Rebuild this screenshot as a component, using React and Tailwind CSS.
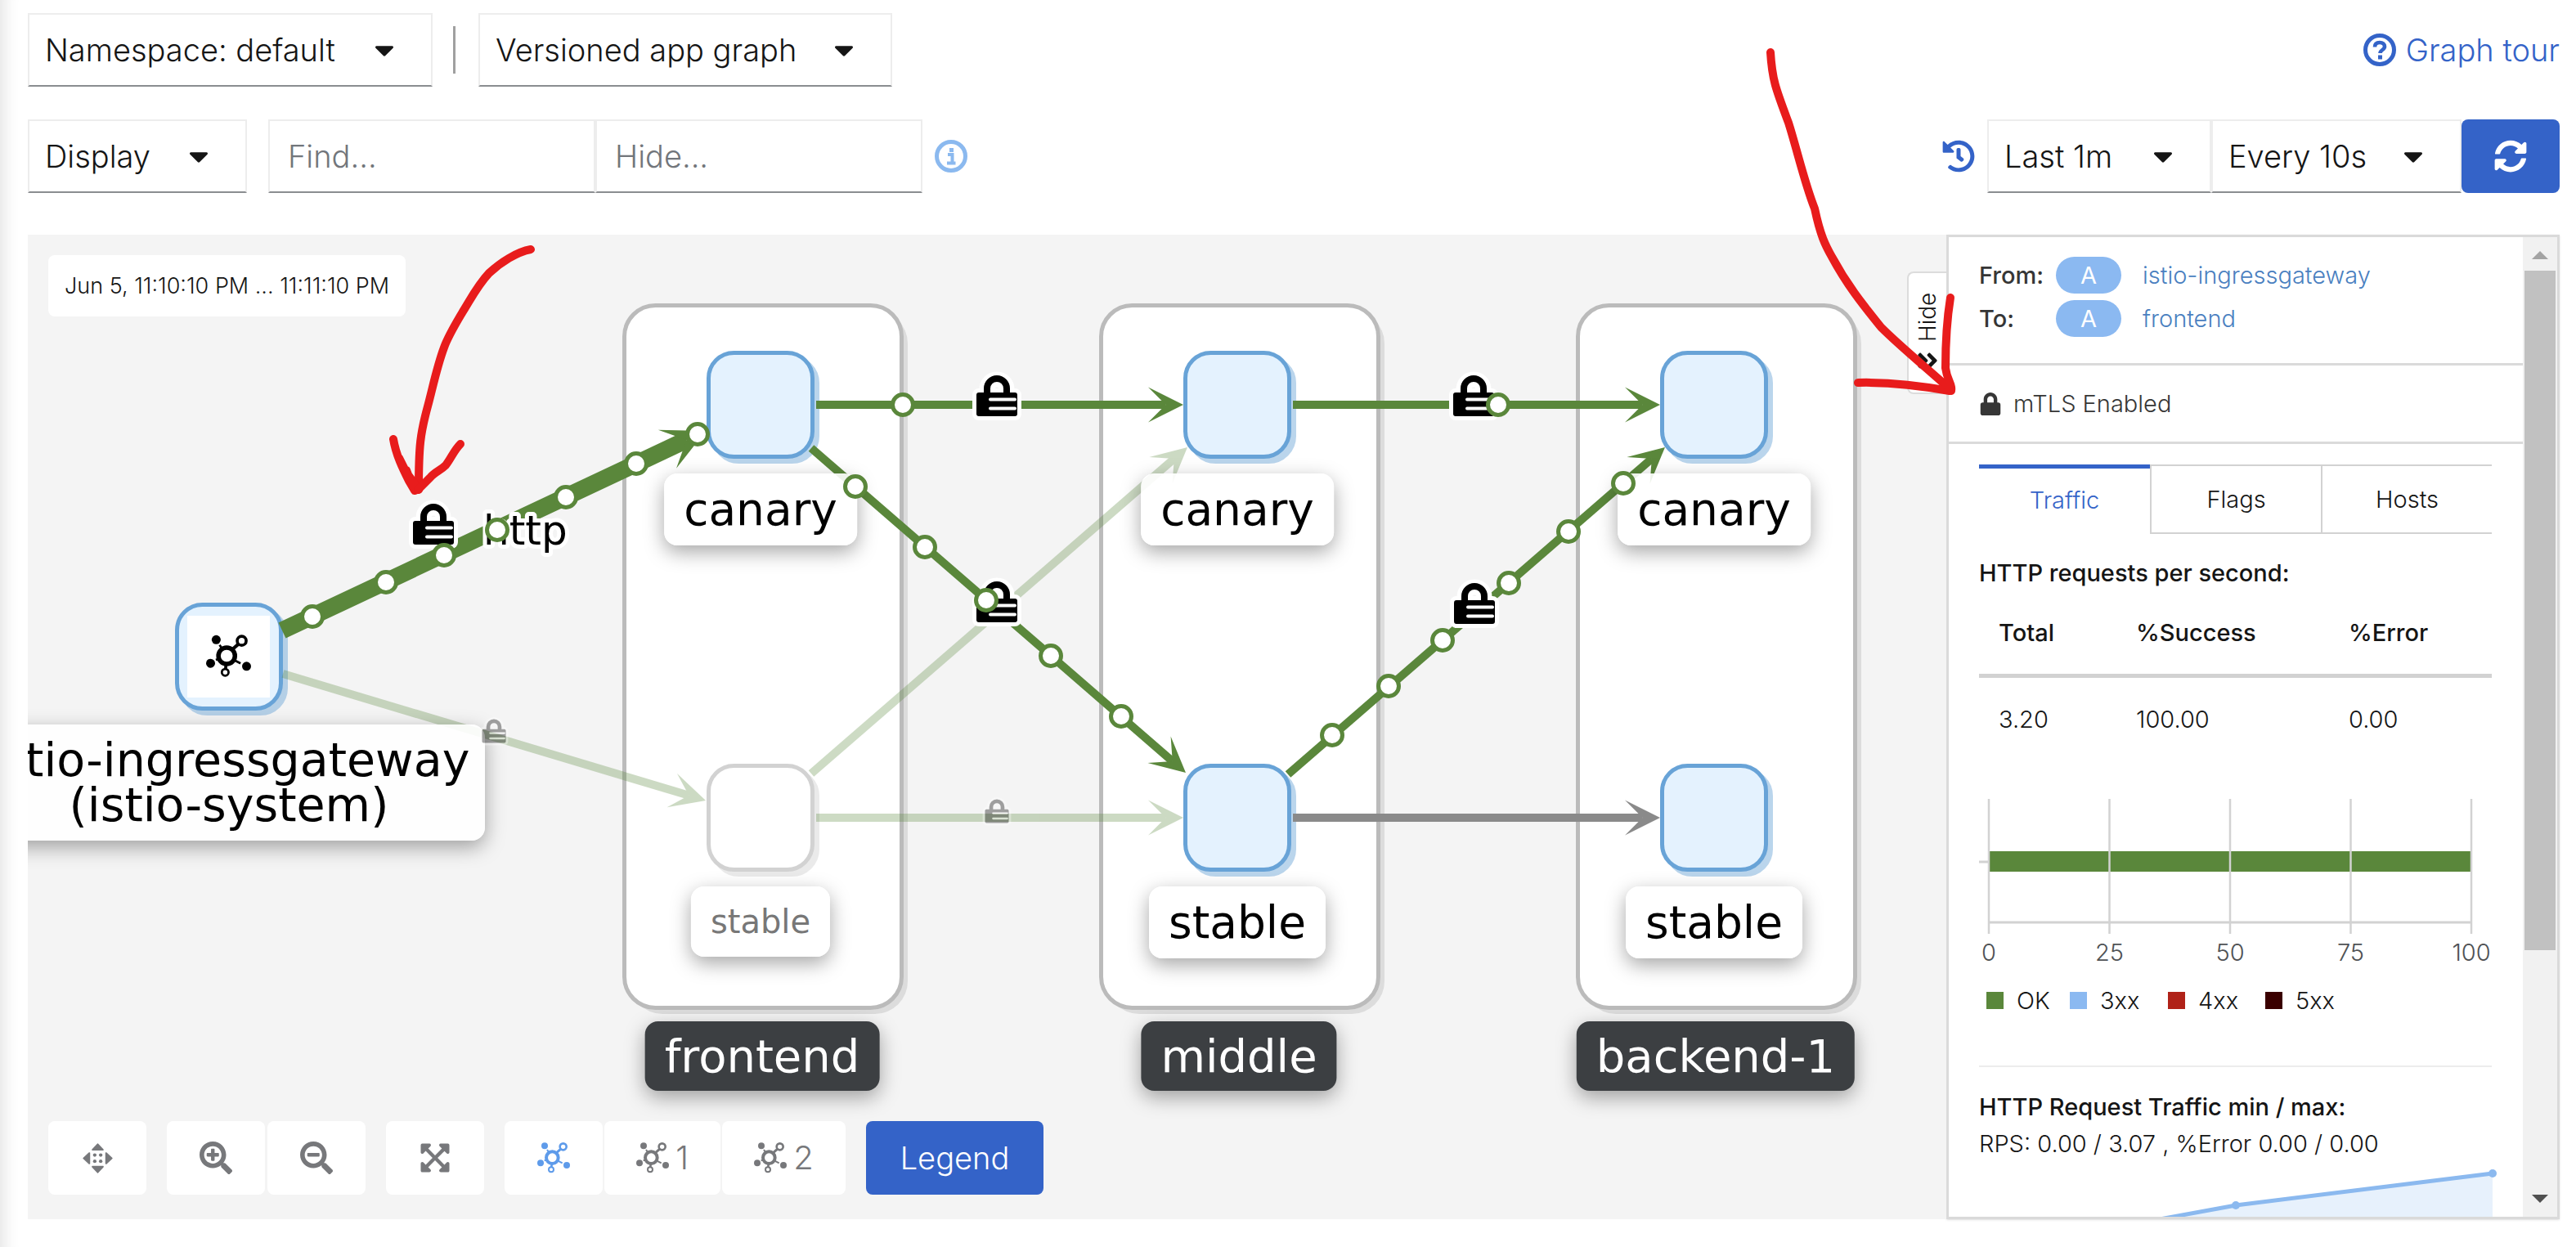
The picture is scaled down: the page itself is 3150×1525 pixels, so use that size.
import React from 'react';
import {
  FaCaretDown,
  FaHistory,
  FaSyncAlt,
  FaLock,
  FaSearchPlus,
  FaSearchMinus,
  FaExpandArrowsAlt,
  FaAngleDoubleLeft,
} from 'react-icons/fa';

const GREEN = '#5a873b';
const ORIGIN = { x: 34, y: 287 };
const NODE = 132;

/* ---------- icons ---------- */

function TopologyIcon({ className }) {
  return (
    <svg viewBox="0 0 120 112" className={className} fill="none" stroke="currentColor" aria-hidden="true">
      <circle cx="55" cy="56" r="22" strokeWidth="12" />
      <circle cx="27" cy="13" r="12" fill="currentColor" stroke="none" />
      <circle cx="12" cy="76" r="12" fill="currentColor" stroke="none" />
      <circle cx="108" cy="84" r="12" fill="currentColor" stroke="none" />
      <circle cx="95" cy="16" r="12" strokeWidth="8" />
      <circle cx="51" cy="100" r="9" strokeWidth="6" />
      <path d="M70 39 L87 24" strokeWidth="9" />
      <path d="M36 27 L42 36 M26 67 L34 64 M76 68 L92 76" strokeWidth="6" />
      <path d="M53 78 L52 92" strokeWidth="8" />
    </svg>
  );
}

function PanIcon({ className }) {
  return (
    <svg viewBox="0 0 112 112" className={className} fill="currentColor" stroke="currentColor" strokeWidth="4" strokeLinejoin="round" aria-hidden="true">
      <path d="M36 24 L56 3 L76 24 V25 H36 Z" />
      <path d="M36 88 L56 109 L76 88 V86 H36 Z" />
      <path d="M24 36 L3 56 L24 76 H26 V36 Z" />
      <path d="M88 36 L109 56 L88 76 H86 V36 Z" />
      <g stroke="none">
        <circle cx="45" cy="44" r="6.5" />
        <circle cx="67" cy="44" r="6.5" />
        <circle cx="45" cy="67" r="6.5" />
        <circle cx="67" cy="67" r="6.5" />
      </g>
    </svg>
  );
}

function HelpIcon({ className }) {
  return (
    <svg viewBox="0 0 40 40" className={className} fill="none" stroke="currentColor" aria-hidden="true">
      <circle cx="20" cy="20" r="17.5" strokeWidth="5" />
      <path d="M14 16.5 C14 12 17 11 20 11 C23.5 11 26 13 26 16 C26 20 20.5 20 20.5 24" strokeWidth="4.6" />
      <path d="M20.5 26.5 V31.5" strokeWidth="5" />
    </svg>
  );
}

function InfoIcon({ className }) {
  return (
    <svg viewBox="0 0 40 40" className={className} fill="none" stroke="currentColor" aria-hidden="true">
      <circle cx="20" cy="20" r="17.5" strokeWidth="5" />
      <path d="M16 18 H21.5 V28 M15 28.5 H25.5" strokeWidth="4" />
      <path d="M20.5 10 V15" strokeWidth="5" />
    </svg>
  );
}

/* ---------- toolbar ---------- */

const field =
  'block h-[90px] border-2 border-t-[#ededed] border-x-[#ededed] border-b-[#8a8d90] bg-white text-[38px] font-light text-[#151515]';

function MenuToggle({ label, width }) {
  return (
    <button type="button" aria-haspopup="true" className={`${field} ${width}`}>
      <span className="flex items-center justify-between pl-[19px] pr-[38px]">
        {label}
        <FaCaretDown aria-hidden="true" />
      </span>
    </button>
  );
}

function SelectToggle({ label, value, width }) {
  return (
    <div className={`relative ${width}`}>
      <select aria-label={label} defaultValue={value} className={`${field} w-full appearance-none pl-[19px] pr-20`}>
        <option>{value}</option>
      </select>
      <FaCaretDown aria-hidden="true" className="pointer-events-none absolute right-10 top-[26px] text-[38px] text-[#151515]" />
    </div>
  );
}

function Toolbar() {
  return (
    <header className="flex flex-col gap-10 pt-4">
      <div className="flex items-center justify-between">
        <div className="flex items-center">
          <MenuToggle label="Namespace: default" width="w-[495px]" />
          <span className="ml-[25px] mr-7 h-[58px] w-[3px] bg-[#a0a0a0]" />
          <SelectToggle label="Graph type" value="Versioned app graph" width="w-[506px]" />
        </div>
        <a href="#tour" className="flex items-center gap-3 text-[38px] font-light text-[#3463c8]">
          <HelpIcon className="size-10" />
          Graph tour
        </a>
      </div>
      <div className="flex items-center justify-between">
        <div className="flex items-center">
          <MenuToggle label="Display" width="w-[268px]" />
          <input aria-label="Find" placeholder="Find..." className={`${field} ml-[26px] w-[400px] px-[22px] placeholder:text-[#72767b]`} />
          <input aria-label="Hide" placeholder="Hide..." className={`${field} w-[400px] px-[22px] placeholder:text-[#72767b]`} />
          <button type="button" aria-label="Find and hide help" className="ml-[15px] text-[#8bb9ef]">
            <InfoIcon className="size-10" />
          </button>
        </div>
        <div className="flex items-center">
          <button type="button" aria-label="Replay" className="mr-[15px] text-[40px] text-[#3463c8]">
            <FaHistory />
          </button>
          <SelectToggle label="Duration" value="Last 1m" width="w-[274px]" />
          <SelectToggle label="Refresh interval" value="Every 10s" width="w-[306px]" />
          <button type="button" aria-label="Refresh" className="flex h-[90px] w-[120px] items-center justify-center rounded-lg bg-[#3463c8] text-[40px] text-white">
            <FaSyncAlt />
          </button>
        </div>
      </div>
    </header>
  );
}

/* ---------- graph ---------- */

const groups = [
  { x: 933, name: 'frontend' },
  { x: 1516, name: 'middle' },
  { x: 2099, name: 'backend-1' },
];

const nodes = [
  { x: 930, y: 495, label: 'canary' },
  { x: 1513, y: 495, label: 'canary' },
  { x: 2096, y: 495, label: 'canary' },
  { x: 930, y: 1000, label: 'stable', faded: true },
  { x: 1513, y: 1000, label: 'stable' },
  { x: 2096, y: 1000, label: 'stable' },
  { x: 280, y: 803, label: 'istio-ingressgateway (istio-system)', gateway: true },
];

const edges = [
  { from: [346, 824], to: [863, 979], faded: true },
  { from: [992, 946], to: [1452, 547], faded: true },
  { from: [998, 1000], to: [1447, 1000], faded: true },
  { from: [1581, 1000], to: [2030, 1000], color: '#8a8a8a' },
  { from: [345, 771], to: [863, 527], width: 21, head: 52 },
  { from: [998, 495], to: [1447, 495] },
  { from: [1581, 495], to: [2030, 495] },
  { from: [992, 548], to: [1450, 945] },
  { from: [1575, 947], to: [2036, 547] },
];

const pulses = [
  [382, 754], [472, 712], [543, 679], [608, 648], [692, 608], [778, 567], [853, 531],
  [1104, 495], [1832, 495],
  [1046, 595], [1131, 669], [1206, 734], [1285, 802], [1371, 876],
  [1629, 899], [1698, 839], [1764, 783], [1845, 713], [1918, 650], [1985, 591],
];

const locks = [
  { x: 530, y: 641 },
  { x: 1219, y: 484 },
  { x: 1802, y: 484 },
  { x: 1219, y: 736 },
  { x: 1803, y: 738 },
  { x: 604, y: 894, faded: true },
  { x: 1219, y: 992, faded: true },
];

function Edge({ from, to, width = 10, head = 43, color = GREEN, faded }) {
  const dx = to[0] - from[0];
  const dy = to[1] - from[1];
  const len = Math.hypot(dx, dy);
  const angle = (Math.atan2(dy, dx) * 180) / Math.PI;
  return (
    <g transform={`translate(${from[0]} ${from[1]}) rotate(${angle})`} opacity={faded ? 0.3 : 1} fill={color}>
      <rect x="0" y={-width / 2} width={len - head / 2} height={width} />
      <path d={`M${len} 0 L${len - head} ${-head / 2} L${len - head / 2} 0 L${len - head} ${head / 2} Z`} />
    </g>
  );
}

function PadLock({ x, y, faded }) {
  return (
    <g transform={`translate(${x} ${y}) scale(${faded ? 0.58 : 1})`} opacity={faded ? 0.35 : 1}>
      <g fill="none" stroke="#fff" strokeLinejoin="round">
        <path d="M-12 0 V-8 A12 12 0 0 1 12 -8 V0" strokeWidth="19" />
        <rect x="-25" y="-4" width="50" height="29" rx="3" strokeWidth="10" fill="#fff" />
      </g>
      <path d="M-12 0 V-9 A12 12 0 0 1 12 -9 V0" fill="none" stroke="#000" strokeWidth="8" />
      <rect x="-25" y="-4" width="50" height="29" rx="3" fill="#000" />
      <path d="M-8 4.5 H22 M-8 15.5 H22" stroke="#fff" strokeWidth="4" strokeLinecap="round" />
    </g>
  );
}

function GraphNode({ x, y, faded, gateway }) {
  const box = { x: x - NODE / 2 + 2.5, y: y - NODE / 2 + 2.5, width: NODE - 5, height: NODE - 5, rx: 31 };
  const stroke = faded ? '#d2d2d2' : '#68a3d7';
  return (
    <g>
      <rect {...box} transform="translate(6 6)" fill={stroke} stroke={stroke} strokeWidth="5" opacity="0.45" />
      <rect {...box} fill={faded ? '#fff' : '#e4f2fe'} stroke={stroke} strokeWidth="5" />
      {gateway && <rect x={x - 51} y={y - 50} width="101" height="100" fill="#fff" />}
    </g>
  );
}

function NodeLabel({ x, y, label, faded, gateway }) {
  const text = faded
    ? 'px-6 py-2 text-[40px]/[70px] text-[#777]'
    : gateway
      ? 'w-[626px] py-4 text-[57px]/[55px] text-black'
      : 'px-6 py-2 text-[55px]/[72px] text-black';
  return (
    <div
      className={`absolute -translate-x-1/2 rounded-2xl bg-white/90 text-center font-[DejaVu_Sans,sans-serif] shadow-[0_8px_24px_rgba(0,0,0,0.35)] ${text}`}
      style={{ left: x - ORIGIN.x, top: y + (gateway ? 83 : 84) - ORIGIN.y }}
    >
      {label}
    </div>
  );
}

function GraphControls() {
  const btn = 'flex h-[90px] items-center justify-center rounded-lg bg-white text-[40px] font-light text-[#77787b]';
  return (
    <div className="absolute bottom-[30px] left-[25px] flex gap-[25px]">
      <button type="button" aria-label="Toggle drag" className={`${btn} w-[120px]`}><PanIcon className="size-[37px]" /></button>
      <div className="flex gap-[3px]">
        <button type="button" aria-label="Zoom in" className={`${btn} w-[120px]`}><FaSearchPlus /></button>
        <button type="button" aria-label="Zoom out" className={`${btn} w-[120px]`}><FaSearchMinus /></button>
      </div>
      <button type="button" aria-label="Fit to view" className={`${btn} w-[120px]`}><FaExpandArrowsAlt /></button>
      <div className="flex gap-[2px]">
        <button type="button" aria-label="Default layout" className={`${btn} w-[120px]`}><TopologyIcon className="w-10 text-[#5e9bea]" /></button>
        <button type="button" aria-label="Layout 1" className={`${btn} w-[142px] gap-2`}><TopologyIcon className="w-10" />1</button>
        <button type="button" aria-label="Layout 2" className={`${btn} w-[151px] gap-2`}><TopologyIcon className="w-10" />2</button>
      </div>
      <button type="button" className="h-[90px] w-[217px] rounded-lg bg-[#3463c8] text-[38px] font-light text-white">Legend</button>
    </div>
  );
}

const viewBox = `${ORIGIN.x} ${ORIGIN.y} 2347 1204`;

function Graph() {
  return (
    <section aria-label="Service graph" className="relative h-[1204px] min-w-0 flex-1 overflow-hidden bg-[#f4f4f4]">
      <svg viewBox={viewBox} className="absolute left-0 top-0 h-[1204px] w-[2347px]">
        {groups.map((g) => (
          <g key={g.name}>
            <rect x={g.x - 163} y="380" width="340" height="860" rx="40" fill="#dcdcdc" />
            <rect x={g.x - 169.5} y="373.5" width="339" height="859" rx="38" fill="#fff" stroke="#bbb" strokeWidth="5" />
          </g>
        ))}
        {nodes.map((n) => <GraphNode key={`${n.x}-${n.y}`} {...n} />)}
        {edges.map((e) => <Edge key={e.from.join() + e.to.join()} {...e} />)}
        <svg x="252" y="776" width="55" height="52" className="text-black">
          <TopologyIcon />
        </svg>
      </svg>

      {nodes.map((n) => <NodeLabel key={`${n.x}-${n.y}`} {...n} />)}
      {groups.map((g) => (
        <div
          key={g.name}
          className="absolute -translate-x-1/2 whitespace-nowrap rounded-2xl bg-[#3c3f42] px-6 py-2 font-[DejaVu_Sans,sans-serif] text-[56px]/[69px] text-white shadow-[0_8px_24px_rgba(0,0,0,0.35)]"
          style={{ left: g.x - 1 - ORIGIN.x, top: 1249 - ORIGIN.y }}
        >
          {g.name}
        </div>
      ))}

      <svg viewBox={viewBox} className="pointer-events-none absolute left-0 top-0 h-[1204px] w-[2347px]">
        {locks.map((l) => <PadLock key={`${l.x}-${l.y}`} {...l} />)}
        <text x="591" y="666" fontSize="50" fontFamily="DejaVu Sans, sans-serif" stroke="#fff" strokeWidth="10" strokeLinejoin="round" paintOrder="stroke">http</text>
        {pulses.map(([x, y]) => (
          <circle key={`${x}-${y}`} cx={x} cy={y} r="12.5" fill="#fff" stroke={GREEN} strokeWidth="5" />
        ))}
      </svg>

      <div className="absolute left-[25px] top-[25px] rounded-lg bg-white px-5 text-[27px]/[75px] font-light text-[#151515]">
        Jun 5, 11:10:10 PM ... 11:11:10 PM
      </div>
      <button type="button" className="absolute right-0 top-[45px] flex h-[150px] w-12 rotate-180 items-center justify-center gap-2 rounded-r-lg border-2 border-l-0 border-[#dcdcdc] bg-white text-[28px] font-light text-[#151515] [writing-mode:vertical-rl]">
        <FaAngleDoubleLeft aria-hidden="true" className="text-[30px]" />
        Hide
      </button>
      <GraphControls />
    </section>
  );
}

/* ---------- side panel ---------- */

function AppBadge() {
  return <span className="flex h-[45px] w-20 items-center justify-center rounded-full bg-[#8bb9f1] text-[29px] font-normal text-white">A</span>;
}

function RequestChart() {
  const ticks = [0, 25, 50, 75, 100];
  const legend = [
    { x: 9, name: 'OK', color: GREEN },
    { x: 111, name: '3xx', color: '#8bb9f1' },
    { x: 231, name: '4xx', color: '#b02218' },
    { x: 350, name: '5xx', color: '#3a0000' },
  ];
  return (
    <svg viewBox="0 0 640 272" className="mt-[75px] h-[272px] w-[640px] text-[29px] font-light">
      <rect x="12" y="64" width="590" height="25" fill={GREEN} />
      <path d="M0 77 H12 M12 151 H602" stroke="#d2d2d2" strokeWidth="3" />
      {ticks.map((t) => (
        <g key={t}>
          <path d={`M${12 + t * 5.9} 0 V165`} stroke="#d2d2d2" strokeWidth="2.5" />
          <text x={12 + t * 5.9} y="198" textAnchor="middle" fill="#4f5255">{t}</text>
        </g>
      ))}
      {legend.map((l) => (
        <g key={l.name}>
          <rect x={l.x} y="236" width="21" height="21" fill={l.color} />
          <text x={l.x + 37} y="257" fill="#151515">{l.name}</text>
        </g>
      ))}
    </svg>
  );
}

function SidePanel() {
  return (
    <aside className="flex h-[1204px] w-[750px] shrink-0 overflow-hidden border-[3px] border-[#dadada] bg-white text-[29px]/[45px] font-light text-[#151515] shadow-sm">
      <div className="min-w-0 flex-1 overflow-hidden">
        <dl className="grid grid-cols-[94px_1fr] gap-y-2 border-b-[3px] border-[#dadada] pb-8 pl-[37px] pt-6">
          <dt className="font-medium text-[#363636]">From:</dt>
          <dd className="flex gap-[26px]"><AppBadge /><a href="#ingress" className="text-[#4a80c0]">istio-ingressgateway</a></dd>
          <dt className="font-medium text-[#363636]">To:</dt>
          <dd className="flex gap-[26px]"><AppBadge /><a href="#frontend" className="text-[#4a80c0]">frontend</a></dd>
        </dl>
        <p className="flex h-24 items-center gap-[14px] border-b-[3px] border-[#dadada] pl-[37px] text-[#363636]">
          <FaLock aria-hidden="true" className="text-[28px]" />
          mTLS Enabled
        </p>
        <div className="pl-[37px] pr-[38px] pt-[25px]">
          <div role="tablist" className="grid h-[85px] grid-cols-3">
            <button type="button" role="tab" aria-selected="true" className="border-t-[5px] border-[#3463c8] pb-1 text-[#3463c8]">Traffic</button>
            <button type="button" role="tab" aria-selected="false" className="border-2 border-r-0 border-[#d2d2d2]">Flags</button>
            <button type="button" role="tab" aria-selected="false" className="border-2 border-r-0 border-[#d2d2d2]">Hosts</button>
          </div>
          <h2 className="mt-[25px] font-medium">HTTP requests per second:</h2>
          <table className="w-full text-left">
            <thead>
              <tr className="border-b-[5px] border-[#d2d2d2]">
                <th className="w-[192px] pb-7 pl-6 pt-7 font-medium">Total</th>
                <th className="w-[260px] font-medium">%Success</th>
                <th className="font-medium">%Error</th>
              </tr>
            </thead>
            <tbody>
              <tr>
                <td className="pl-6 pt-7">3.20</td>
                <td className="pt-7">100.00</td>
                <td className="pt-7">0.00</td>
              </tr>
            </tbody>
          </table>
          <RequestChart />
          <hr className="mt-[54px] border-t-2 border-[#ececec]" />
          <h2 className="mt-[26px] font-medium">HTTP Request Traffic min / max:</h2>
          <p>RPS: 0.00 / 3.07 , %Error 0.00 / 0.00</p>
          <svg viewBox="0 0 640 70" className="h-[70px] w-[640px]">
            <path d="M227 69 L314 53 L628 14 V70 H227 Z" fill="#e7f1fc" />
            <path d="M210 72 L314 53 L628 14" fill="none" stroke="#8bb9ef" strokeWidth="5" />
            <circle cx="314" cy="53" r="5" fill="#8bb9ef" />
            <circle cx="628" cy="14" r="5" fill="#8bb9ef" />
          </svg>
        </div>
      </div>
      <div aria-hidden="true" className="flex w-[42px] shrink-0 flex-col items-center bg-[#f1f1f1] px-[2px]">
        <svg viewBox="0 0 20 10" className="mt-[17px] h-[10px] w-5 fill-[#a3a3a3]"><path d="M0 10 L10 0 L20 10 Z" /></svg>
        <div className="mt-[14px] h-[831px] w-full bg-[#c1c1c1]" />
        <svg viewBox="0 0 20 10" className="mb-[17px] mt-auto h-[10px] w-5 fill-[#505050]"><path d="M0 0 L10 10 L20 0 Z" /></svg>
      </div>
    </aside>
  );
}

/* ---------- hand-drawn arrows ---------- */

function Annotations() {
  return (
    <svg viewBox="0 0 3150 1525" className="pointer-events-none absolute left-0 top-0 h-[1525px] w-[3150px]" fill="none" stroke="#e81c1c" strokeWidth="10" strokeLinecap="round" strokeLinejoin="round" aria-hidden="true">
      <path d="M649 305 C632 308 612 321 598 334 C584 349 576 365 566 381 C556 398 548 411 543 425 C534 449 529 475 523 497 C514 530 512 545 512 599" />
      <path d="M481 537 C484 556 493 574 500 588 L507 600 L512 598 L497 578 L488 560 M497 575 L505 596" />
      <path d="M563 543 C555 551 552 560 545 569 C539 575 532 577 526 584 L511 599" />
      <path d="M2165 64 C2167 98 2172 110 2187 150 C2198 185 2207 225 2219 255 C2226 288 2232 300 2240 314 C2260 351 2280 375 2300 400 C2322 422 2350 445 2378 470" />
      <path d="M2272 468 C2310 467 2345 471 2384 478" />
      <path d="M2385 364 C2380 395 2379 420 2379 450 C2381 466 2388 470 2386 478 L2378 468" />
    </svg>
  );
}

export default function App() {
  return (
    <div className="relative bg-white font-[Inter,sans-serif] shadow-[inset_24px_0_20px_-20px_rgba(0,0,0,0.12)]">
      <div className="pb-[34px] pl-[34px] pr-5">
        <Toolbar />
        <main className="mt-[51px] flex">
          <Graph />
          <SidePanel />
        </main>
      </div>
      <Annotations />
    </div>
  );
}
